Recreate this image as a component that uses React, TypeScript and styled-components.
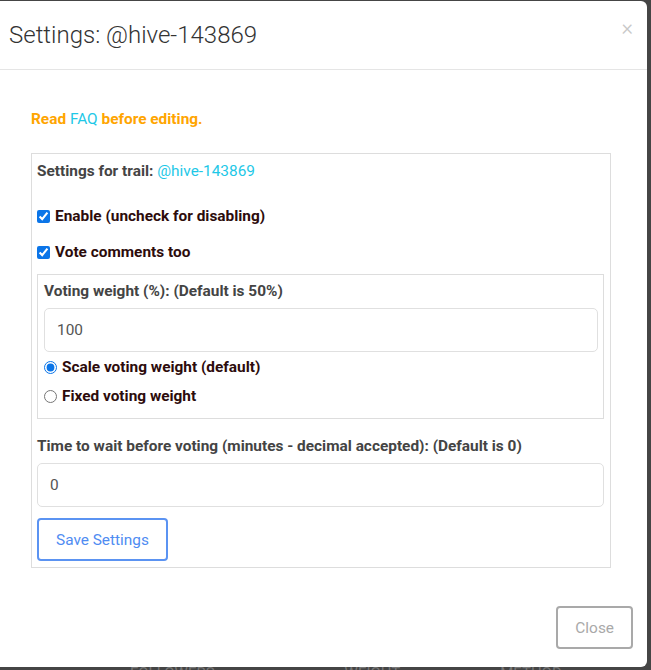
import React from 'react'
import styled, { createGlobalStyle } from 'styled-components'

const GlobalStyle = createGlobalStyle`
  html, body {
    margin: 0;
    padding: 0;
    background: #454545;
    font-family: Roboto, 'Liberation Sans', Arial, sans-serif;
  }
  * { box-sizing: border-box; }
`

const Backdrop = styled.div`
  width: 651px;
  height: 670px;
  background: #454545;
  padding: 1px 4px 0 0;
  overflow: hidden;
`

const Modal = styled.div`
  width: 647px;
  height: 666px;
  background: #fff;
  border-radius: 0 6px 6px 0;
  display: flex;
  flex-direction: column;
`

const Header = styled.div`
  height: 69px;
  border-bottom: 1px solid #e5e5e5;
  display: flex;
  align-items: flex-start;
  justify-content: space-between;
  padding: 20px 14px 0 9px;
`

const Title = styled.h4`
  margin: 0;
  font-size: 24px;
  font-weight: 300;
  color: #333;
  line-height: 28px;
`

const CloseX = styled.span`
  font-size: 22px;
  line-height: 14px;
  color: #c8c8c8;
  font-weight: 300;
`

const Body = styled.div`
  padding: 39px 36px 0 31px;
  flex: 1;
`

const Notice = styled.p`
  margin: 0 0 23px;
  font-size: 15.4px;
  font-weight: 700;
  color: #ffa500;
  line-height: 21px;
`

const Link = styled.a`
  color: #1ec8e7;
  font-weight: 400;
  text-decoration: none;
`

const Panel = styled.div<{ $inner?: boolean }>`
  border: 1px solid #ddd;
  padding: ${p => (p.$inner ? '6px 5px 11px 6px' : '7px 6px 6px 5px')};
  display: flex;
  flex-direction: column;
  margin: ${p => (p.$inner ? '11px 0 17px' : '0')};
`

const Heading = styled.div`
  font-size: 15.4px;
  font-weight: 700;
  color: #444;
  line-height: 21px;
`

const CheckRow = styled.label<{ $gap: number }>`
  display: flex;
  align-items: center;
  gap: 5px;
  font-size: 15.4px;
  font-weight: 700;
  color: #2d0c0c;
  line-height: 21px;
  margin-top: ${p => p.$gap}px;

  input {
    margin: 0;
    width: 13px;
    height: 13px;
    accent-color: #0b75e8;
  }
`

const Input = styled.div`
  height: 44px;
  border: 1px solid #e0e0e0;
  border-radius: 5px;
  margin-top: 6px;
  padding: 0 12px;
  display: flex;
  align-items: center;
  font-size: 15.4px;
  color: #555;
`

const Button = styled.button<{ $muted?: boolean }>`
  height: 43px;
  border: 2px solid ${p => (p.$muted ? '#a9a9a9' : '#5b93f2')};
  border-radius: 4px;
  background: #fff;
  color: ${p => (p.$muted ? '#a9a9a9' : '#4f8cf2')};
  font-family: Roboto, 'Liberation Sans', Arial, sans-serif;
  font-size: 15.4px;
  padding: 0 17px;
  cursor: pointer;
`

const SaveWrap = styled.div`
  margin-top: 11px;
`

const Footer = styled.div`
  display: flex;
  justify-content: flex-end;
  padding: 0 14px 18px 0;
`

const Behind = styled.div`
  height: 3px;
  overflow: hidden;
  display: flex;
  font-size: 15px;
  line-height: 15px;
  color: #777;
  text-transform: uppercase;
`

const BehindCol = styled.span<{ $left: number }>`
  margin-left: ${p => p.$left}px;
  margin-top: -1px;
`

export default function App() {
  return (
    <>
      <GlobalStyle />
      <Backdrop>
        <Modal>
          <Header>
            <Title>Settings: @hive-143869</Title>
            <CloseX>×</CloseX>
          </Header>
          <Body>
            <Notice>
              Read <Link>FAQ</Link> before editing.
            </Notice>
            <Panel>
              <Heading>
                Settings for trail: <Link>@hive-143869</Link>
              </Heading>
              <CheckRow $gap={24}>
                <input type="checkbox" defaultChecked />
                Enable (uncheck for disabling)
              </CheckRow>
              <CheckRow $gap={15}>
                <input type="checkbox" defaultChecked />
                Vote comments too
              </CheckRow>
              <Panel $inner>
                <Heading>Voting weight (%): (Default is 50%)</Heading>
                <Input>100</Input>
                <CheckRow $gap={5}>
                  <input type="radio" name="w" defaultChecked />
                  Scale voting weight (default)
                </CheckRow>
                <CheckRow $gap={8}>
                  <input type="radio" name="w" />
                  Fixed voting weight
                </CheckRow>
              </Panel>
              <Heading>Time to wait before voting (minutes - decimal accepted): (Default is 0)</Heading>
              <Input>0</Input>
              <SaveWrap>
                <Button>Save Settings</Button>
              </SaveWrap>
            </Panel>
          </Body>
          <Footer>
            <Button $muted>Close</Button>
          </Footer>
        </Modal>
        <Behind>
          <BehindCol $left={130}>Followers</BehindCol>
          <BehindCol $left={130}>Weight</BehindCol>
          <BehindCol $left={100}>Method</BehindCol>
        </Behind>
      </Backdrop>
    </>
  )
}
